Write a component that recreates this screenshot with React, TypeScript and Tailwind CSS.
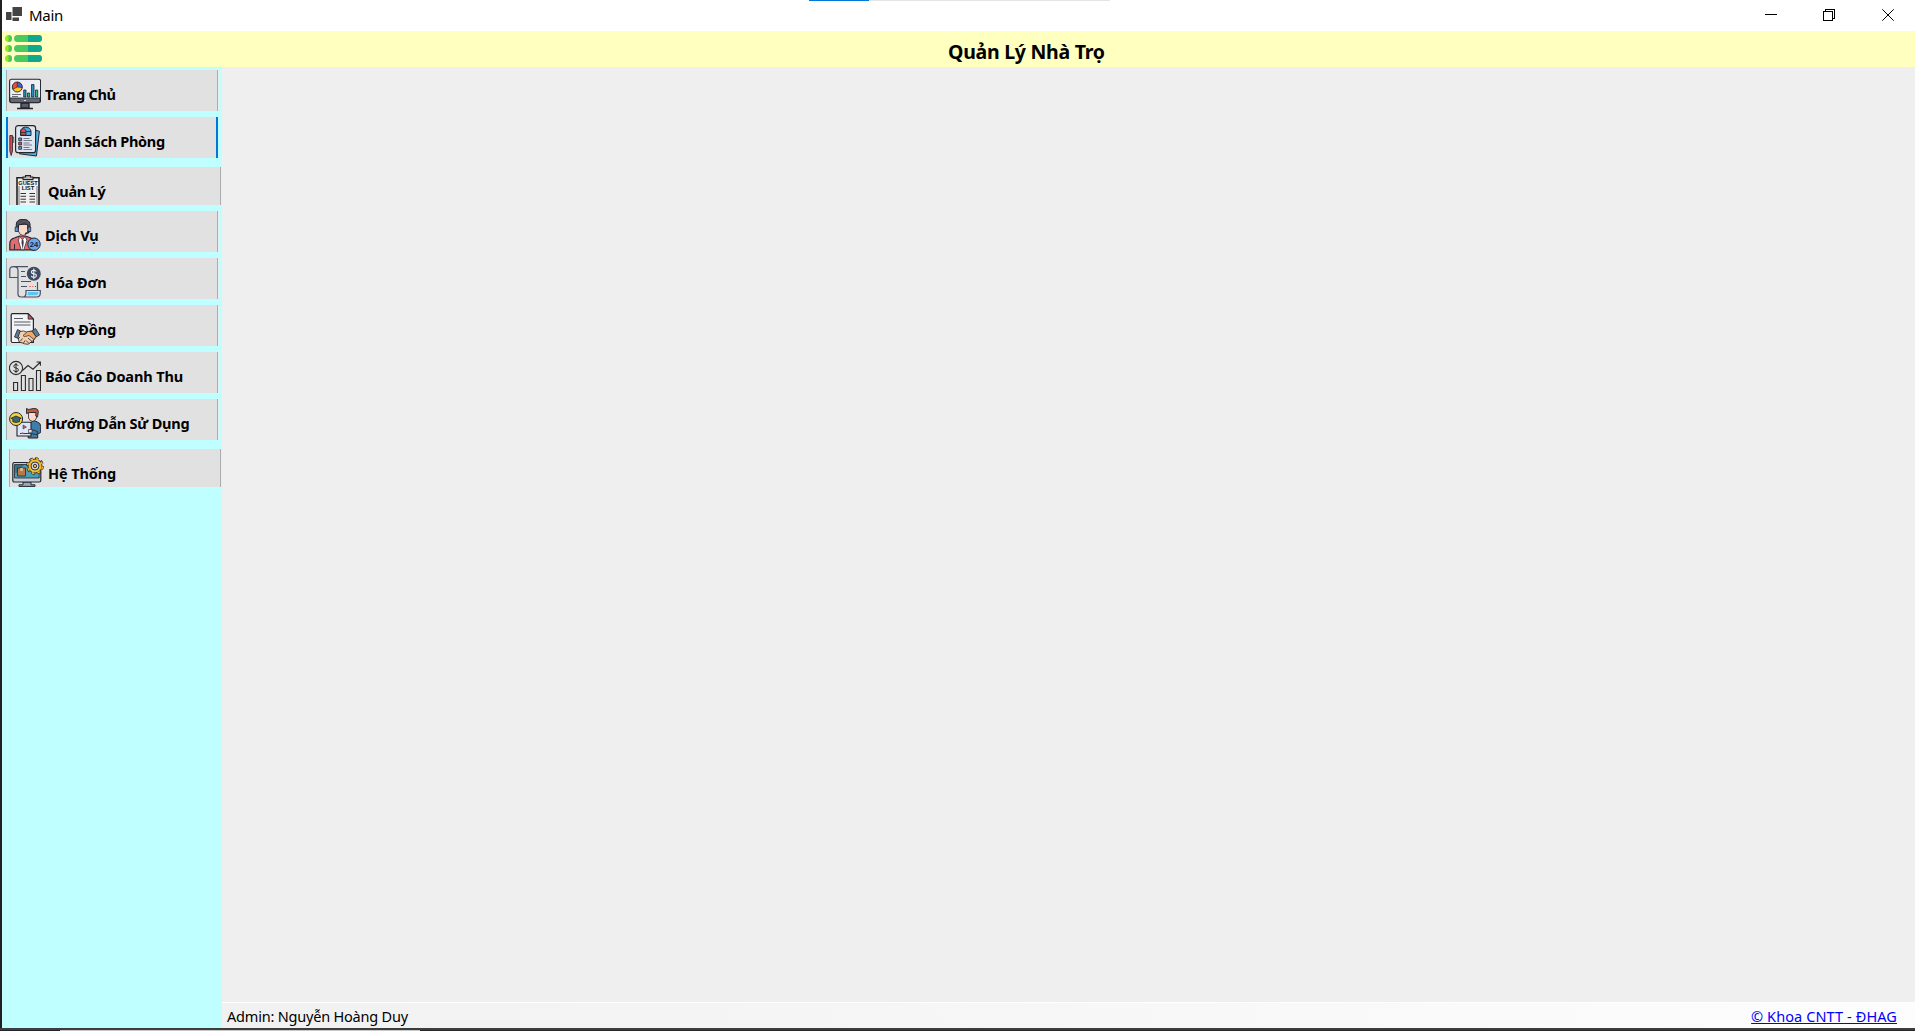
import type { ReactNode } from "react";

const K = "#22262f";

const Dashboard = () => (
  <>
    <path d="M8 30.500h16M12 25h8v5h-8z" fill="#5b5e69" stroke={K} strokeWidth="1.400" />
    <rect x=".6" y="1.200" width="31" height="23.400" rx="2" fill="#eceef4" stroke={K} strokeWidth="1.100" />
    <path d="M1 20h30v3q0 1.500-1.500 1.500h-27Q1 24.500 1 23z" fill="#656873" stroke={K} strokeWidth=".8" />
    <path d="M15 22.500h2" stroke="#ddd" />
    <circle cx="8.300" cy="9" r="5" fill="#ef4b3c" />
    <path d="M8.300 9V4a5 5 0 0 1 4.200 7.600z" fill="#3d67d6" />
    <path d="M8.300 9l-4.500 2.300A5 5 0 0 0 13.300 9.500z" fill="#ffc51f" />
    <path d="M8.300 4v5l-4.500 2.300M8.300 9l5 .5" fill="none" stroke={K} strokeWidth=".7" />
    <circle cx="8.300" cy="9" r="5" fill="none" stroke={K} strokeWidth=".9" />
    <path d="M3 16.500h9M3 18.500h6" stroke="#4a4d57" strokeWidth=".8" />
    <g stroke={K} strokeWidth=".8">
      <path d="M14.700 12h2.300v7h-2.300zM22.500 6.500H25V19h-2.500z" fill="#268fc0" />
      <path d="M18.500 15h2.200v4h-2.200zM26.500 12h2.200v7h-2.200z" fill="#2fb89a" />
    </g>
  </>
);

const RoomList = () => (
  <>
    <path d="M25 5l5.400 1.200-3 24.800-17-2.200z" fill="#4ab3ee" stroke={K} strokeWidth="1" />
    <rect x="6.600" y=".7" width="20" height="27" rx="2.500" fill="#dfe5ee" stroke={K} strokeWidth="1.200" />
    <path d="M.8 10.500h2.700V26l-1.300 4.500L.8 26z" fill="#df4648" stroke={K} strokeWidth=".8" />
    <path d="M3.700 12h1v6" fill="none" stroke={K} strokeWidth=".7" />
    <path d="M11.500 10.500V6.500a5 4.200 0 0 1 10.500 0v4z" fill="#4ea8df" stroke={K} strokeWidth="1" />
    <path d="M11.800 10V5.500l2.800-2.300 2.400 2.300V10z" fill="#e24c50" stroke={K} strokeWidth=".8" />
    <path d="M17 6.500h5M12 7.500h5" stroke={K} strokeWidth=".8" />
    <g stroke={K} strokeWidth=".8">
      <path d="M9.700 13h2.900v2.700H9.700zM9.700 21.500h2.900v2.800H9.700z" fill="#4a9fd4" />
      <path d="M9.700 17.200h2.900v2.800H9.700z" fill="#e24c50" />
    </g>
    <path d="M14.500 13.500h6M14.500 15.500h8.500M14.500 18h6M14.500 20h8.500M14.500 22.500h6M14.500 24.500h8.500" stroke="#59616e" strokeWidth=".8" />
  </>
);

const GuestList = () => (
  <>
    <path d="M5 35V2.700h22V35" fill="#f0f0f0" stroke="#222" strokeWidth="1.600" />
    <path d="M7 35V11M25 35V11" fill="none" stroke="#555" strokeWidth=".8" />
    <path d="M11 2h2.500V.6h5V2H21v2.600H11z" fill="#bbb" stroke="#222" strokeWidth="1.100" />
    <rect x="6" y="5.800" width="20" height="4.800" fill="#eee" />
    <text x="6.300" y="10" textLength="19.400" lengthAdjust="spacingAndGlyphs" fontSize="5.600" fontWeight="900" fill="#111" fontFamily="Liberation Sans, sans-serif">GUEST</text>
    <text x="9.700" y="15.200" textLength="12.500" lengthAdjust="spacingAndGlyphs" fontSize="5.600" fontWeight="900" fill="#111" fontFamily="Liberation Sans, sans-serif">LIST</text>
    <path d="M8.500 18.500h5.500M17.500 18.500h5.500M8.500 21.300h5.500M17.500 21.300h5.500M8.500 24.200h5.500M17.500 24.200h5.500M8.500 27h5.500M17.500 27h5.500" stroke="#333" strokeWidth="1" />
  </>
);

const Service = () => (
  <>
    <path d="M.8 30.800V25q0-5 4.500-6l5.200-2h6l5.500 2q4 1 4 6v5.800z" fill="#e06c70" stroke={K} strokeWidth="1.200" />
    <path d="M10.300 17.500l3 3 3-3 1.500 4-3 9.300h-2.600L9.500 22z" fill="#fff" stroke={K} strokeWidth=".7" />
    <path d="M12.800 20.500h1.500l.4 3-.9 7-1.300-7z" fill="#333a4a" />
    <path d="M5.500 25v5.500" stroke={K} strokeWidth=".9" />
    <path d="M9.300 5.500h9.600V12q-1.500 4.500-4.800 4.500T9.300 12z" fill="#fbd9c8" stroke={K} strokeWidth=".8" />
    <path d="M7.300 9V5q.5-4.700 6.700-4.700T21 5v4l-2.200 1V6l-3-1.300L9.500 6v4z" fill="#55525e" stroke={K} strokeWidth="1" />
    <path d="M6.200 8h3v4.500h-3zM19 8h2.700v4.500H19z" fill="#5d9cdb" stroke={K} strokeWidth=".8" />
    <path d="M20.500 12.500q-1 2-4.500 1.800" fill="none" stroke={K} strokeWidth="1.300" />
    <circle cx="25" cy="25.200" r="6.200" fill="#6ba6ee" stroke={K} strokeWidth="1" />
    <text x="20.800" y="28" textLength="8.400" lengthAdjust="spacingAndGlyphs" fontSize="7.500" fontWeight="700" fill="#142239" fontFamily="Liberation Sans, sans-serif">24</text>
  </>
);

const Invoice = () => (
  <>
    <path d="M4.500.7H19M4.500.7Q9 .7 9 4.500V28q0 3 3.500 3h15q3.800 0 3.800-4v-2.500H17V27q0 4-3.500 4M28.500 16v8.500M9 11.500H.8V4Q.8.7 4.500.7" fill="none" stroke="#475268" strokeWidth="1.200" />
    <path d="M12 5.500h4M12 10.500h5M12 15.500h10M12 20.500h6M26 20.500h1" stroke="#475268" strokeWidth="1.200" />
    <path d="M20 20.500h2M23 20.500h1.500" stroke="#f2766e" />
    <path d="M19 26h10.500q-.3 3.200-2.500 3.200h-8.500z" fill="#56c7f5" />
    <circle cx="24.800" cy="7.700" r="7" fill="#3d4961" />
    <path d="M27.200 5.500q-.6-1.300-2.400-1.300-2.300 0-2.300 1.700t2.400 1.800q2.500.2 2.500 1.900t-2.500 1.700q-2.200 0-2.600-1.500M24.800 2.500v10.500" fill="none" stroke="#f1f4f8" strokeWidth="1.100" />
  </>
);

const Contract = () => (
  <>
    <path d="M3.500.7h15.700l5.200 5.300v23.500H3.500Q2.200 29.500 2.200 28V2Q2.200.7 3.500.7z" fill="#f3f4f6" stroke={K} strokeWidth="1.200" />
    <path d="M19.200.8v5.300h5.200z" fill="#e6535a" stroke={K} strokeWidth=".9" />
    <path d="M5 5.500h9M5 9h16.500M5 12h16.500" stroke="#565b65" strokeWidth="1" />
    <path d="M5.500 24l3-7.500 3 1.500-2 7.500z" fill="#597e96" stroke={K} strokeWidth=".8" />
    <path d="M26.500 15.500L30.500 22l-3.500 2-4-6z" fill="#597e96" stroke={K} strokeWidth=".8" />
    <path d="M11 18.500l3.500-.5 3 1 5.500-1 4 5.500-2 3.500-6 4.300-3.500-.5-5.500-2L9 24.500z" fill="#f6d0ad" stroke={K} strokeWidth=".8" />
    <path d="M14 22.500l4.500-4 4.500-.3 4 5.500-2 2.800-5-4-3 .8q-2 1-3-.8z" fill="#edaa66" stroke={K} strokeWidth=".7" />
    <path d="M9 26l2-2M11.500 28l2-2.500M14.500 30l1.500-2.500M19 25l4 3.500M17 27.500l3 3" stroke={K} strokeWidth=".8" />
  </>
);

const Report = () => (
  <g fill="none" stroke="#2b2b2b" strokeWidth="1.100">
    <circle cx="7" cy="8" r="6.600" />
    <path d="M9.200 5.800Q8.700 4.500 7 4.500q-2.200 0-2.200 1.700T7 8q2.400.2 2.400 1.900T7 11.600q-2 0-2.400-1.500M7 3v10" strokeWidth="1" />
    <path d="M13.500 10.500l5.500-5 5 3.700 7-6.700M27.500 2h3.900v3.800" />
    <path d="M4.600 22.500h4V30.500h-4zM12.400 15.500h4v15h-4zM20 18.500h4v12h-4zM27.500 10.500h4v20h-4z" />
  </g>
);

const Guide = () => (
  <>
    <path d="M22 15.500l3-2 3.500 1.500q3.200 1 3.200 4.500v6l-3 1.500v4h-9.500V20z" fill="#3f7da8" stroke={K} strokeWidth="1" />
    <path d="M19.500 5.500h8V11q-1.200 3.300-4 3.300T19.500 11z" fill="#fbd8ca" stroke={K} strokeWidth=".8" />
    <path d="M17.500 6.500V1.500l2.300 1Q29.500-.5 29.300 5l-.8 5-1.700-1V5.500h-6z" fill="#c05a3a" stroke={K} strokeWidth=".9" />
    <path d="M8 15.300h14V29H8z" fill="#dbe8fb" stroke={K} strokeWidth="1.100" />
    <path d="M14 18l3.500 2-3.500 2z" fill="#dd555b" stroke={K} strokeWidth=".5" />
    <path d="M11 26.500h9" stroke={K} strokeWidth=".9" />
    <circle cx="13.500" cy="26.300" r="1" fill="#dd555b" />
    <path d="M20.500 23h4l4 1.500-.5 3-7.500-1z" fill="#3f7da8" stroke={K} strokeWidth=".8" />
    <path d="M19.500 22.500h3.500v3.300h-3.500z" fill="#fbd8ca" stroke={K} strokeWidth=".6" />
    <circle cx="7.100" cy="12" r="6.500" fill="#f6d33a" stroke={K} strokeWidth="1" />
    <path d="M2 11.300l5-2.300 5.300 2.300L10.500 12v2.700q-3.500 1.600-6.700 0V12z" fill="#3b6679" stroke={K} strokeWidth=".8" />
  </>
);

const System = () => (
  <>
    <path d="M11 25h8v2.800h4v1.600H7v-1.600h4z" fill="#9ba7b4" stroke={K} strokeWidth="1" />
    <rect x=".8" y="5.500" width="28" height="19.500" rx="1.500" fill="#c4ced8" stroke={K} strokeWidth="1.200" />
    <path d="M2.500 7.500h24.700v13.500H2.500z" fill="#4b9fb4" stroke={K} strokeWidth=".8" />
    <path d="M3 8h9L3.500 17z" fill="#347386" />
    <path d="M5.500 11h8v8h-8z" fill="#b97845" stroke={K} strokeWidth=".8" />
    <path d="M8.300 11h2.500v3H8.300z" fill="#e5c090" />
    <circle cx="23" cy="9" r="7.500" fill="none" stroke={K} strokeWidth="2.600" strokeDasharray="3.400 2.490" />
    <circle cx="23" cy="9" r="7" fill="#f2b82e" stroke={K} strokeWidth=".9" />
    <circle cx="23" cy="9" r="7.400" fill="none" stroke="#f2b82e" strokeWidth="1.500" strokeDasharray="2.600 3.290" strokeDashoffset="-.4" />
    <circle cx="23" cy="9" r="4" fill="#d3dbe2" stroke={K} strokeWidth=".9" />
    <circle cx="23" cy="9" r="1.700" fill="#f2b82e" stroke={K} strokeWidth=".9" />
  </>
);

type Item = { label: string; icon: ReactNode; box: string; iconPos: string; text: string };

const normal = "ml-1 h-[41px] border-x border-[#adadad] shadow-[1px_0_0_#e1f0f0,-1px_0_0_#d0f5f5]";
const focused = "ml-1 h-[41px] border-x-2 border-[#0078d7]";
const group = "ml-[7px] mt-[3px] h-[38px] border-x border-[#adadad] shadow-[-1px_0_0_#e1f0f0]";

const items: Item[] = [
  { label: "Trang Chủ", icon: <Dashboard />, box: normal, iconPos: "left-[2px]", text: "ml-[38px] tracking-[-0.25px]" },
  { label: "Danh Sách Phòng", icon: <RoomList />, box: focused, iconPos: "left-px", text: "ml-9 tracking-[-0.3px]" },
  { label: "Quản Lý", icon: <GuestList />, box: group, iconPos: "left-[2px]", text: "ml-[38px] tracking-[-0.25px]" },
  { label: "Dịch Vụ", icon: <Service />, box: normal, iconPos: "left-[2px]", text: "ml-[38px] tracking-[-0.1px]" },
  { label: "Hóa Đơn", icon: <Invoice />, box: normal, iconPos: "left-[2px]", text: "ml-[38px] tracking-[-0.15px]" },
  { label: "Hợp Đồng", icon: <Contract />, box: normal, iconPos: "left-[2px]", text: "ml-[38px] tracking-[-0.15px]" },
  { label: "Báo Cáo Doanh Thu", icon: <Report />, box: normal, iconPos: "left-[2px]", text: "ml-[38px] tracking-[-0.13px]" },
  { label: "Hướng Dẫn Sử Dụng", icon: <Guide />, box: normal, iconPos: "left-[2px]", text: "ml-[38px] tracking-[-0.22px]" },
  { label: "Hệ Thống", icon: <System />, box: group, iconPos: "left-[2px]", text: "ml-[38px] tracking-[-0.1px]" },
];

function TitleBar() {
  return (
    <div className="relative flex h-[31px] items-start bg-white">
      <div className="absolute left-[807px] top-0 flex h-px w-[301px] bg-[#e5e5e5]">
        <div className="w-[60px] bg-[#0078d7]" />
      </div>
      <svg className="ml-1 mt-[7px] h-[15px] w-4" viewBox="0 0 16 15" fill="#444">
        <path d="M0 5h5.500v8H0zM6.500 0H16v9H6.500zM6.500 10.500h6.500V14H6.500z" />
      </svg>
      <span className="ml-[7px] mt-[5px] text-[15px] leading-[21px] tracking-[-0.3px] text-black">Main</span>
      <div className="ml-auto mr-[21px] mt-[9px] flex gap-[46px]">
        <svg className="h-3 w-[13px]" viewBox="0 0 13 12" shapeRendering="crispEdges"><path d="M1 5h12v1H1z" /></svg>
        <svg className="mr-px h-3 w-3" viewBox="0 0 12 12" fill="none" stroke="#000" shapeRendering="crispEdges">
          <path d="M.5 2.500h9v9h-9zM2.500 2.500v-2h9v9h-2" />
        </svg>
        <svg className="h-3 w-3" viewBox="0 0 12 12" stroke="#000"><path d="M.3.300l11.400 11.400M11.700.300L.3 11.700" /></svg>
      </div>
    </div>
  );
}

function Header() {
  return (
    <div className="flex h-9 items-start bg-[#ffffc0]">
      <svg className="ml-[3px] mt-[4px] h-7 w-[37px]" viewBox="0 0 37 28">
        {[0, 10, 20].map((y) => (
          <g key={y} transform={`translate(0 ${y})`}>
            <circle cx="3.500" cy="3.500" r="3.500" fill="#98e81f" />
            <path d="M3.500 0a3.500 3.500 0 0 1 0 7z" fill="#4bc85f" />
            <rect x="9" width="28" height="7" rx="3.500" fill="#4bc85f" />
            <path d="M23 0h10.500a3.500 3.500 0 0 1 0 7H23z" fill="#10a88c" />
          </g>
        ))}
      </svg>
      <h1 className="ml-[906px] mt-[7px] text-[19.500px] font-bold leading-7 tracking-[-0.27px] text-black">Quản Lý Nhà Trọ</h1>
    </div>
  );
}

export default function App() {
  return (
    <div className="flex h-[1031px] w-[1915px] flex-col overflow-hidden whitespace-nowrap bg-[#3c3c3c] font-['Noto_Sans',sans-serif]">
      <div className="flex h-[1028px] flex-col border-l-2 border-[#202024]">
        <TitleBar />
        <Header />
        <div className="flex min-h-0 flex-1">
          <nav className="flex w-[220px] flex-col gap-[6px] bg-[#c0ffff] pt-[3px]">
            {items.map((it) => (
              <button key={it.label} className={`relative flex w-[212px] shrink-0 items-start overflow-hidden bg-[#e1e1e1] text-left ${it.box}`}>
                <svg className={`absolute top-2 h-8 w-8 ${it.iconPos}`} viewBox="0 0 32 32">{it.icon}</svg>
                <span className={`mt-[14px] text-[14.500px] font-bold leading-5 text-black ${it.text}`}>{it.label}</span>
              </button>
            ))}
          </nav>
          <div className="flex flex-1 flex-col">
            <main className="flex-1 bg-[#efefef]" />
            <footer className="flex h-[26px] items-start justify-between border-t border-white bg-linear-to-r from-[#f1f1f1] to-[#fdfdfd] pl-[5px] pr-[18px] text-[14.500px] leading-[22px]">
              <span className="mt-[2px] tracking-[-0.2px] text-black">Admin: Nguyễn Hoàng Duy</span>
              <a className="mt-[2px] tracking-[0.1px] text-[#0000ff] underline">© Khoa CNTT - ĐHAG</a>
            </footer>
          </div>
        </div>
      </div>
      <div className="h-[2px] bg-[#3c3e3d]" />
      <div className="flex h-px">
        <div className="w-[60px] bg-[#24242c]" />
        <div className="w-[360px] bg-[#c9c9c9]" />
        <div className="flex-1 bg-[#2b2724]" />
      </div>
    </div>
  );
}
